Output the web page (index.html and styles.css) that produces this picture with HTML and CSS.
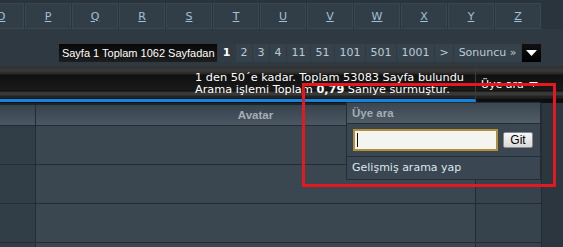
FILE: index.html
```html
<!DOCTYPE html>
<html lang="tr">
<head>
<meta charset="utf-8">
<title>Üye listesi</title>
<link rel="stylesheet" href="styles.css">
</head>
<body>
<div class="page">
  <div class="letters">
    <a class="cell">O</a><a class="cell">P</a><a class="cell">Q</a><a class="cell">R</a><a class="cell">S</a><a class="cell">T</a><a class="cell">U</a><a class="cell">V</a><a class="cell">W</a><a class="cell">X</a><a class="cell">Y</a><a class="cell">Z</a>
  </div>

  <div class="pager">
    <span class="pinfo">Sayfa 1 Toplam 1062 Sayfadan</span>
    <span class="pg cur">1</span>
    <span class="pg">2</span>
    <span class="pg">3</span>
    <span class="pg">4</span>
    <span class="pg">11</span>
    <span class="pg">51</span>
    <span class="pg">101</span>
    <span class="pg">501</span>
    <span class="pg">1001</span>
    <span class="pg">&gt;</span>
    <span class="pg">Sonuncu »</span>
    <span class="pdrop"><svg width="11" height="6" viewBox="0 0 11 6"><path d="M0 0h11L5.5 6z" fill="#fff"/></svg></span>
  </div>

  <div class="bar">
    <div class="bar-left">
      <div class="bar-text">
        <div>1 den 50´e kadar. Toplam 53083 Sayfa bulundu</div>
        <div>Arama işlemi Toplam <b>0,79</b> Saniye sürmüştür.</div>
      </div>
    </div>
    <div class="bar-right">Üye ara <svg width="9" height="5" viewBox="0 0 9 5"><path d="M0 0h9L4.5 5z" fill="#fff"/></svg></div>
  </div>

  <div class="table">
    <div class="row head">
      <div class="c1"></div>
      <div class="c2">Avatar</div>
      <div class="c3"></div>
    </div>
    <div class="row">
      <div class="c1"></div><div class="c2"></div><div class="c3"></div>
    </div>
    <div class="row">
      <div class="c1"></div><div class="c2"></div><div class="c3"></div>
    </div>
    <div class="row">
      <div class="c1"></div><div class="c2"></div><div class="c3"></div>
    </div>
    <div class="row">
      <div class="c1"></div><div class="c2"></div><div class="c3"></div>
    </div>
  </div>

  <div class="popup">
    <div class="pop-head">Üye ara</div>
    <div class="pop-form">
      <span class="pop-input"><span class="caret"></span></span>
      <span class="pop-btn">Git</span>
    </div>
    <div class="pop-link">Gelişmiş arama yap</div>
  </div>

  <div class="redbox"></div>
</div>
</body>
</html>
```

FILE: styles.css
```css
html, body {
  margin: 0;
  padding: 0;
}
body {
  background: #2c363e;
  font-family: "DejaVu Sans", Verdana, sans-serif;
  font-size: 11px;
  overflow: hidden;
}
.page {
  position: relative;
  width: 563px;
  height: 247px;
  overflow: hidden;
}

/* letters */
.letters {
  display: flex;
  gap: 1px;
  margin-left: -22px;
  padding-top: 3px;
  height: 26px;
  background: #2a343c;
}
.cell {
  flex: none;
  box-sizing: border-box;
  width: 46px;
  height: 26px;
  background: #323e47;
  border: 1px solid #3b4750;
  color: #a3c0d8;
  text-decoration: underline;
  display: flex;
  align-items: center;
  justify-content: center;
  font-size: 11px;
}

/* pager */
.pager {
  display: flex;
  justify-content: flex-end;
  gap: 1px;
  background: #2e3941;
  padding: 15px 22px 4px 0;
  height: 18px;
}
.pinfo {
  box-sizing: border-box;
  width: 158px;
  padding: 0 2px;
  background: linear-gradient(#070707, #1e1e1e);
  color: #fff;
  font-family: "Liberation Sans", Arial, sans-serif;
  font-size: 11px;
  line-height: 18px;
  white-space: nowrap;
  text-align: center;
}
.pg {
  padding: 0 4.5px;
  background: #35424c;
  color: #bccad5;
  line-height: 18px;
  white-space: nowrap;
}
.pg.cur {
  font-weight: bold;
  color: #fff;
  background: #303b44;
}
.pdrop {
  width: 19px;
  background: linear-gradient(#111, #000);
  display: flex;
  align-items: center;
  justify-content: center;
}

/* dark bar */
.bar {
  display: flex;
  height: 37px;
  background: linear-gradient(#333 0, #333 3px, #3c3c3c 4px, #262626 8px, #101010 9px, #1a1a1a 24px, #0b0b0b 25px, #383838 26px, #3a3a3a 29px, #222 30px, #222 32px, #0e0e0e 33px, #0e0e0e 37px);
}
.bar-left {
  width: 476px;
  box-sizing: border-box;
  border-bottom: 3px solid #1484e0;
  border-right: 1px solid #3b3b3b;
  height: 36px;
}
.bar-text {
  padding: 6px 0 0 195px;
  color: #fff;
  font-size: 11.3px;
  line-height: 12px;
  white-space: nowrap;
}
.bar-right {
  flex: 1;
  height: 36px;
  padding-left: 5px;
  color: #fff;
  display: flex;
  align-items: center;
  gap: 5px;
  box-sizing: border-box;
}

/* table */
.table {
  width: 542px;
  border-top: 2px solid #1d252b;
}
.row {
  display: flex;
  height: 38px;
  border-bottom: 1px solid #232c33;
}
.row.head {
  height: 20px;
}
.c1 {
  width: 35px;
  border-right: 1px solid #232c33;
  background: #323e47;
}
.c2 {
  width: 439px;
  border-right: 1px solid #232c33;
  background: #3a4751;
}
.c3 {
  width: 65px;
  border-right: 1px solid #232c33;
  background: #37434c;
}
.head .c1, .head .c2, .head .c3 {
  background: linear-gradient(#36424c, #4b5762);
}
.head .c2 {
  color: #a5aeb6;
  font-family: "Liberation Sans", Arial, sans-serif;
  font-weight: bold;
  font-size: 11.5px;
  text-align: center;
  line-height: 21px;
}

/* popup */
.popup {
  position: absolute;
  left: 346px;
  top: 102px;
  width: 193px;
  border: 1px solid #242d34;
  background: #3a4651;
}
.pop-head {
  height: 20px;
  line-height: 21px;
  padding-left: 5px;
  background: linear-gradient(#3a4650, #505c66);
  color: #a3adb5;
  font-family: "Liberation Sans", Arial, sans-serif;
  font-weight: bold;
  font-size: 11.5px;
  border-bottom: 1px solid #242d34;
}
.pop-form {
  display: flex;
  align-items: center;
  gap: 5px;
  height: 32px;
  padding-left: 6px;
  border-bottom: 1px solid #242d34;
}
.pop-input {
  box-sizing: border-box;
  width: 145px;
  height: 22px;
  border: 2px solid #b58e3a;
  background: #f4f4f0;
  display: flex;
  align-items: center;
  padding-left: 2px;
}
.caret {
  width: 1px;
  height: 14px;
  background: #111;
}
.pop-btn {
  box-sizing: border-box;
  width: 30px;
  height: 16px;
  border: 1px solid #8a8a8a;
  border-radius: 2px;
  background: linear-gradient(#f7f7f7, #d9d9d9);
  color: #000;
  font-family: "Liberation Sans", Arial, sans-serif;
  font-size: 12px;
  line-height: 14px;
  text-align: center;
}
.pop-link {
  height: 22px;
  line-height: 22px;
  padding-left: 5px;
  color: #dde6ee;
}

.redbox {
  position: absolute;
  left: 302px;
  top: 83px;
  width: 248px;
  height: 98px;
  border: 3px solid #e5171f;
  pointer-events: none;
}
```
